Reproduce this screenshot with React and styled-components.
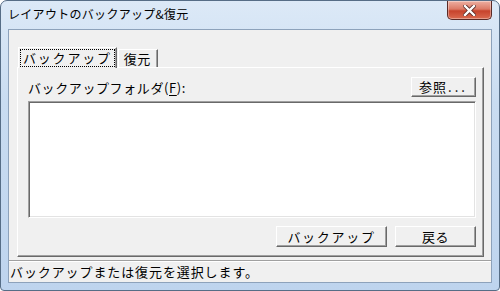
import styled, { createGlobalStyle } from "styled-components";

const GlobalStyle = createGlobalStyle`
body {
  margin: 0;
  background: #ffffff;
  font-family: "Noto Sans CJK JP", "Noto Sans", sans-serif;
}
`;

const WindowFrame = styled.div`
  width: 500px;
  height: 291px;
  box-sizing: border-box;
  border: 1px solid #566d86;
  border-radius: 7px 7px 4px 4px;
  background: linear-gradient(180deg, #dce9f7 0%, #c9dcf1 35%, #bed4ee 100%);
  display: flex;
  flex-direction: column;
  overflow: hidden;
`;

const TitleBar = styled.div`
  height: 28px;
  display: flex;
  align-items: flex-start;
  justify-content: space-between;
  padding-left: 7px;
`;

const TitleText = styled.div`
  font-size: 12px;
  line-height: 12px;
  margin-top: 7px;
  letter-spacing: 0.3px;
  color: #000;
  white-space: nowrap;
`;

const CloseButton = styled.div`
  width: 43px;
  height: 18px;
  margin-right: 7px;
  border: 1px solid #5a2a26;
  border-top: none;
  border-radius: 0 0 5px 5px;
  background: linear-gradient(180deg, #eeb0a2 0%, #dc7a66 45%, #c7432c 55%, #da6a50 100%);
  display: flex;
  align-items: center;
  justify-content: center;
  box-shadow: inset 0 0 0 1px rgba(255, 255, 255, 0.35);
`;

const Client = styled.div`
  flex: 1;
  margin: 0 7px 7px;
  background: #f0f0f0;
  border: 1px solid #8da2bb;
  display: flex;
  flex-direction: column;
`;

const TabArea = styled.div`
  padding: 16px 7px 0 8px;
  display: flex;
  flex-direction: column;
`;

const TabStrip = styled.div`
  display: flex;
  align-items: flex-end;
  height: 21px;
  padding-left: 1px;
`;

const Tab = styled.div`
  height: ${(p) => (p.$active ? "21px" : "18px")};
  box-sizing: border-box;
  padding: ${(p) => (p.$active ? "2px 2px 0" : "1px 6px 0 5px")};
  margin-left: ${(p) => (p.$active ? "0" : "1px")};
  border-top: 1px solid #ffffff;
  border-left: 1px solid #ffffff;
  border-right: 1px solid #696969;
  box-shadow: inset -1px 0 0 #a0a0a0;
  background: #f0f0f0;
  position: relative;
  z-index: ${(p) => (p.$active ? 2 : 1)};
  margin-bottom: ${(p) => (p.$active ? "-1px" : "0")};
  font-size: 13px;
  line-height: 16px;
  letter-spacing: ${(p) => p.$spacing || "0px"};
  white-space: nowrap;
`;

const FocusRect = styled.span`
  display: inline-block;
  outline: 1px dotted #000;
  outline-offset: 0;
  padding: 0 2px 0 2px;
  line-height: 16px;
`;

const Panel = styled.div`
  height: 190px;
  box-sizing: border-box;
  border-top: 1px solid #ffffff;
  border-left: 1px solid #ffffff;
  border-right: 1px solid #696969;
  border-bottom: 1px solid #696969;
  box-shadow: inset -1px -1px 0 #a0a0a0;
  padding: 8px 7px 0 10px;
  display: flex;
  flex-direction: column;
`;

const Row = styled.div`
  display: flex;
  align-items: center;
  justify-content: ${(p) => p.$justify || "space-between"};
  gap: ${(p) => p.$gap || "0px"};
  margin-top: ${(p) => p.$top || "0px"};
`;

const Label = styled.div`
  font-size: 13px;
  letter-spacing: 0.6px;
  white-space: nowrap;
  padding-top: 2px;
  u {
    text-decoration: underline;
    text-underline-offset: 2px;
  }
`;

const Button = styled.div`
  width: ${(p) => p.$w};
  height: ${(p) => p.$h || "21px"};
  box-sizing: border-box;
  background: #f0f0f0;
  border-top: 1px solid #ffffff;
  border-left: 1px solid #ffffff;
  border-right: 1px solid #696969;
  border-bottom: 1px solid #696969;
  box-shadow: inset -1px -1px 0 #a0a0a0;
  display: flex;
  align-items: center;
  justify-content: center;
  font-size: 13px;
  letter-spacing: ${(p) => p.$spacing || "0px"};
  white-space: nowrap;
`;

const Dots = styled.span`
  letter-spacing: 3px;
  margin-left: 1px;
`;

const FolderBox = styled.div`
  margin-top: 4px;
  height: 117px;
  box-sizing: border-box;
  background: #ffffff;
  border-top: 1px solid #a0a0a0;
  border-left: 1px solid #a0a0a0;
  border-right: 1px solid #ffffff;
  border-bottom: 1px solid #ffffff;
  box-shadow: inset 1px 1px 0 #696969, inset -1px -1px 0 #e3e3e3;
`;

const StatusBar = styled.div`
  margin-top: auto;
  height: 21px;
  border-top: 1px solid #a0a0a0;
  box-shadow: inset 0 1px 0 #ffffff;
  display: flex;
  align-items: center;
  padding-left: 1px;
  font-size: 13px;
  letter-spacing: 0.9px;
  white-space: nowrap;
`;

export default function App() {
  return (
    <>
      <GlobalStyle />
      <WindowFrame>
        <TitleBar>
          <TitleText>レイアウトのバックアップ&amp;復元</TitleText>
          <CloseButton>
            <svg width="13" height="11" viewBox="0 0 13 11">
              <path
                d="M2 1 L11 10 M11 1 L2 10"
                stroke="#5a2a26"
                strokeWidth="4"
                strokeLinecap="square"
              />
              <path
                d="M2 1 L11 10 M11 1 L2 10"
                stroke="#ffffff"
                strokeWidth="2.4"
                strokeLinecap="square"
              />
            </svg>
          </CloseButton>
        </TitleBar>
        <Client>
          <TabArea>
            <TabStrip>
              <Tab $active $spacing="1.8px">
                <FocusRect>バックアップ</FocusRect>
              </Tab>
              <Tab $spacing="0.5px">復元</Tab>
            </TabStrip>
            <Panel>
              <Row>
                <Label>
                  バックアップフォルダ(<u>F</u>):
                </Label>
                <Button $w="65px" $h="20px" $spacing="1px">
                  参照<Dots>...</Dots>
                </Button>
              </Row>
              <FolderBox />
              <Row $justify="flex-end" $gap="8px" $top="8px">
                <Button $w="111px" $spacing="1.7px">
                  バックアップ
                </Button>
                <Button $w="81px" $spacing="0.5px">
                  戻る
                </Button>
              </Row>
            </Panel>
          </TabArea>
          <StatusBar>バックアップまたは復元を選択します。</StatusBar>
        </Client>
      </WindowFrame>
    </>
  );
}
